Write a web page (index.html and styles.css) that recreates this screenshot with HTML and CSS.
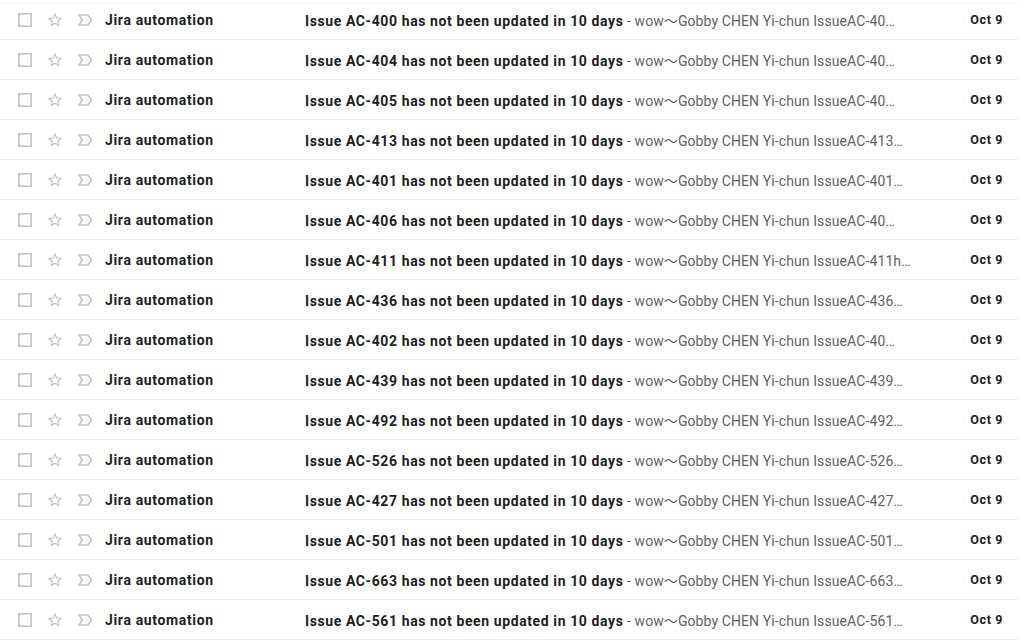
FILE: index.html
```html
<!DOCTYPE html>
<html>
<head>
<meta charset="utf-8">
<link rel="stylesheet" href="styles.css">
</head>
<body>
<div class="list" id="list"></div>
<script src="app.js"></script>
</body>
</html>
```

FILE: styles.css
```css
* { box-sizing: border-box; }
html, body { margin: 0; padding: 0; background: #fff; }
body {
  font-family: Roboto, "Noto Sans", Arial, sans-serif;
  color: #202124;
  width: 1024px;
  height: 641px;
  overflow: hidden;
}
.list {
  width: 1018px;
  background: linear-gradient(#f2f2f2, #f2f2f2) 0 3px / 1018px 1px no-repeat;
}
.row {
  display: flex;
  align-items: center;
  height: 40px;
  padding: 1px 15px 0 18px;
  border-bottom: 1px solid #ededed;
  font-size: 14px;
  line-height: 20px;
  white-space: nowrap;
}
.ico { display: block; flex: none; fill: #c4c4c4; }
.cb { width: 14px; height: 14px; }
.star { width: 18px; height: 18px; margin-left: 14px; }
.imp { width: 20px; height: 20px; margin-left: 11px; }
.sender {
  flex: none;
  width: 200px;
  margin-left: 10px;
  font-weight: 700;
  letter-spacing: 0.65px;
}
.main {
  flex: 1;
  overflow: hidden;
  text-overflow: ellipsis;
  padding-right: 20px;
}
.subj { font-weight: 700; letter-spacing: 0.6px; }
.snip { color: #5f6368; letter-spacing: 0.1px; }
.tilde { font-family: "Noto Sans CJK JP", sans-serif; letter-spacing: 0; }
.date {
  flex: none;
  width: 50px;
  text-align: right;
  font-size: 12.5px;
  font-weight: 700;
  letter-spacing: 0.6px;
}
```

FILE: app.js
```js
var data = [
  ["400","IssueAC-40"],["404","IssueAC-40"],["405","IssueAC-40"],["413","IssueAC-413"],
  ["401","IssueAC-401"],["406","IssueAC-40"],["411","IssueAC-411h"],["436","IssueAC-436"],
  ["402","IssueAC-40"],["439","IssueAC-439"],["492","IssueAC-492"],["526","IssueAC-526"],
  ["427","IssueAC-427"],["501","IssueAC-501"],["663","IssueAC-663"],["561","IssueAC-561"]
];
var cb = '<svg class="ico cb" viewBox="0 0 14 14"><rect x="0.9" y="0.9" width="12.2" height="12.2" fill="none" stroke="#c6c6c6" stroke-width="1.6"/></svg>';
var star = '<svg class="ico star" viewBox="0 0 24 24"><path d="M22 9.24l-7.19-.62L12 2 9.19 8.63 2 9.24l5.46 4.73L5.82 21 12 17.27 18.18 21l-1.63-7.03L22 9.24zM12 15.4l-3.76 2.27 1-4.28-3.32-2.88 4.38-.38L12 6.1l1.71 4.04 4.38.38-3.32 2.88 1 4.28L12 15.4z"/></svg>';
var imp = '<svg class="ico imp" viewBox="0 0 24 24"><path d="M15 19H3l4.5-7L3 5h12c.65 0 1.26.31 1.63.84L21 12l-4.37 6.16c-.37.52-.98.84-1.630.84zm-8.37-2H15l3.55-5L15 7H6.63l3.5 5-3.5 5z"/></svg>';
var html = '';
data.forEach(function (d) {
  html += '<div class="row">' + cb + star + imp +
    '<div class="sender">Jira automation</div>' +
    '<div class="main"><span class="subj">Issue AC-' + d[0] + ' has not been updated in 10 days</span>' +
    '<span class="snip"> - wow<span class="tilde">\uFF5E</span>Gobby CHEN Yi-chun ' + d[1] + '\u2026</span></div>' +
    '<div class="date">Oct 9</div></div>';
});
document.getElementById('list').innerHTML = html;
```
